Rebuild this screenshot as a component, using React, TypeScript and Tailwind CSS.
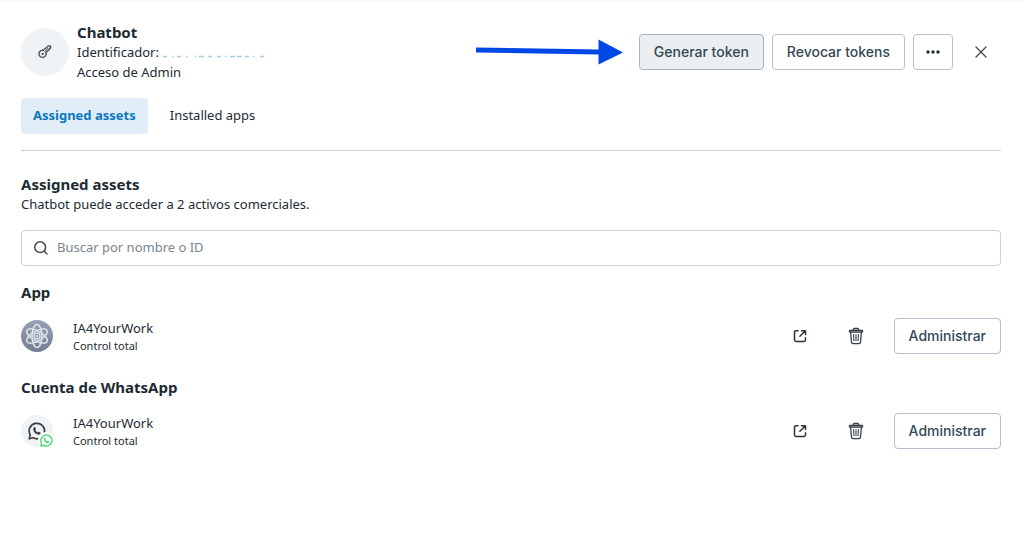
import { useState, type ReactNode } from 'react';

interface Asset {
  id: string;
  title: string;
  name: string;
  role: string;
  avatar: ReactNode;
}

function KeyIcon() {
  return (
    <svg width="16" height="16" viewBox="0 0 16 16" fill="none" stroke="#53595e" strokeWidth="1.5" strokeLinecap="round" strokeLinejoin="round">
      <path d="M6.300 6.300 11.300 2 13.500 2 13.700 3.800 12.400 4.700 12.200 6 10.900 6.400 9 8.700" />
      <path d="M6.300 6.300A3.600 3.600 0 1 0 9 8.700" />
      <path d="m7.500 7.900 3.600-3.700" strokeWidth="1" />
      <circle cx="5.700" cy="9.900" r="1.200" fill="#53595e" stroke="none" />
    </svg>
  );
}

function PointerArrow() {
  return (
    <svg width="147" height="26" viewBox="0 0 147 26" className="shrink-0" aria-hidden="true">
      <path d="M0 8.500 122.500 10.500V0.500L147 13.500 122.500 25.500V15.500L0 13.500Z" fill="#0048e5" />
    </svg>
  );
}

// Tips of the hidden account number
function HiddenId() {
  return (
    <svg width="104" height="7" viewBox="0 0 104 7" className="ml-0.5 inline-block align-bottom" stroke="#a5cde6" strokeWidth="1.500" aria-hidden="true">
      <path d="M2 1.500h4M11 1.500h1.500M16 1.500h4M25 1.500h1.500M34 1.500h1.500M38 1.500h5M47 1.500h4M56 1.500h4M64 1.500h1.500M69 1.500h5M76 1.500h5M84 1.500h4M92 1.500h1.500M99 1.500h4" />
    </svg>
  );
}

function SearchIcon() {
  return (
    <svg width="16" height="16" viewBox="0 0 16 16" fill="none" stroke="#444950" strokeWidth="1.500" strokeLinecap="round">
      <circle cx="7.200" cy="7.200" r="5.400" />
      <path d="m11.300 11.300 2.700 2.700" />
    </svg>
  );
}

function OpenIcon() {
  return (
    <svg width="14" height="14" viewBox="0 0 14 14" fill="none" stroke="#2b343a" strokeWidth="1.500" strokeLinecap="round" strokeLinejoin="round">
      <path d="M5 1.700H2.900A1.400 1.400 0 0 0 1.500 3.100V11A1.400 1.400 0 0 0 2.900 12.400h8.200a1.400 1.400 0 0 0 1.400-1.400V8.800" />
      <path d="M8.600 1.700h3.900v3.900M12.200 2 6.900 7.300" />
    </svg>
  );
}

function TrashIcon() {
  return (
    <svg width="16" height="18" viewBox="0 0 16 18" fill="none" stroke="#3a4248" strokeWidth="1.300" strokeLinecap="round" strokeLinejoin="round">
      <path d="M1.500 3.500h13v1.600h-13zM5.300 3.300V2.500a1 1 0 0 1 1-1h3.400a1 1 0 0 1 1 1v.8" />
      <path d="m2.600 5.300.9 9.900a1.600 1.600 0 0 0 1.600 1.400h5.800a1.600 1.600 0 0 0 1.600-1.400l.9-9.900" />
      <path d="m5.600 7.500.3 6.300M8 7.500v6.300M10.400 7.500l-.3 6.300" strokeWidth="1.100" />
    </svg>
  );
}

function AtomAvatar() {
  return (
    <svg width="32" height="32" viewBox="0 0 32 32" fill="none">
      <defs>
        <linearGradient id="atom-bg" x1="0" y1="0" x2="0" y2="1">
          <stop offset="0" stopColor="#97a0b5" />
          <stop offset="1" stopColor="#747d92" />
        </linearGradient>
      </defs>
      <circle cx="16" cy="16" r="16" fill="url(#atom-bg)" />
      <g stroke="#dfe3eb" strokeWidth="1.500">
        <ellipse cx="16" cy="16" rx="5" ry="11.500" />
        <ellipse cx="16" cy="16" rx="5" ry="11.500" transform="rotate(60 16 16)" />
        <ellipse cx="16" cy="16" rx="5" ry="11.500" transform="rotate(120 16 16)" />
        <circle cx="16" cy="16" r="3" />
      </g>
      <circle cx="16" cy="16" r="1.200" fill="#dfe3eb" />
    </svg>
  );
}

function WhatsAppGlyph({ size, color }: { size: number; color: string }) {
  return (
    <svg width={size} height={size} viewBox="0 0 18 18" fill="none">
      <path d="M1.200 16.800 2.200 12.900A7.700 7.700 0 1 1 5.200 15.800Z" stroke={color} strokeWidth="1.700" strokeLinejoin="round" />
      <path
        d="M6.100 5.300c.4-.4.900-.3 1.100.1l.6 1.400c.1.300 0 .6-.5 1.100.6 1.200 1.400 1.900 2.600 2.500.5-.6.700-.8 1.100-.6l1.300.6c.4.200.5.500.3 1-.5 1.100-1.500 1.500-2.700 1.200C7.600 12 5.800 10.200 5.300 7.700c-.2-1 .1-1.800.8-2.400Z"
        fill={color}
      />
    </svg>
  );
}

function WhatsAppAvatar() {
  return (
    <div className="relative flex size-8 items-center justify-center rounded-full bg-[#f0f3f6]">
      <WhatsAppGlyph size={18} color="#3b3f43" />
      <span className="absolute -right-px -bottom-px flex size-4 items-center justify-center rounded-full bg-white">
        <WhatsAppGlyph size={13} color="#35d366" />
      </span>
    </div>
  );
}

const assets: Asset[] = [
  { id: 'app', title: 'App', name: 'IA4YourWork', role: 'Control total', avatar: <AtomAvatar /> },
  { id: 'whatsapp', title: 'Cuenta de WhatsApp', name: 'IA4YourWork', role: 'Control total', avatar: <WhatsAppAvatar /> },
];

const outlineButton =
  "h-9 rounded border border-[#b4c0cb] px-3.5 font-['Inter',sans-serif] text-sm font-medium text-[#344854] hover:bg-gray-50";

function AssetSection({ asset }: { asset: Asset }) {
  return (
    <section>
      <h3 className="text-[15px] leading-5 font-bold">{asset.title}</h3>
      <div className="mt-4 flex items-center">
        {asset.avatar}
        <div className="ml-5 flex-1">
          <p className="text-[13px] leading-5">{asset.name}</p>
          <p className="text-[11px] leading-4">{asset.role}</p>
        </div>
        <div className="flex items-center gap-5">
          <button aria-label="Abrir" className="flex size-9 items-center justify-center rounded">
            <OpenIcon />
          </button>
          <button aria-label="Eliminar" className="flex size-9 items-center justify-center rounded">
            <TrashIcon />
          </button>
          <button className={outlineButton}>Administrar</button>
        </div>
      </div>
    </section>
  );
}

export default function App() {
  const [tab, setTab] = useState<'assets' | 'apps'>('assets');
  const [query, setQuery] = useState('');

  return (
    <div className="min-h-screen border-t-2 border-[#f6f7f8] bg-white pt-5 pr-[23px] pl-[21px] font-['Noto_Sans',sans-serif] text-[#1c2b33]">
      {/* Header */}
      <header className="flex items-center">
        <div className="flex size-12 shrink-0 items-center justify-center rounded-full bg-[#f0f3f6]">
          <KeyIcon />
        </div>
        <div className="ml-2 flex-1 text-[13px] leading-5">
          <h1 className="text-[15px] leading-5 font-bold">Chatbot</h1>
          <p>
            Identificador:
            <HiddenId />
          </p>
          <p>Acceso de Admin</p>
        </div>
        <PointerArrow />
        <div className="ml-4 flex gap-2">
          <button className="h-9 rounded border border-[#a9b6c2] bg-[#ebeff2] px-3.5 font-['Inter',sans-serif] text-sm font-medium text-[#344854]">
            Generar token
          </button>
          <button className={outlineButton}>Revocar tokens</button>
          <button aria-label="Más opciones" className="flex h-9 w-10 items-center justify-center rounded border border-[#b4c0cb]">
            <svg width="14" height="4" viewBox="0 0 14 4" fill="#1c2b33">
              <circle cx="2" cy="2" r="1.700" />
              <circle cx="7" cy="2" r="1.700" />
              <circle cx="12" cy="2" r="1.700" />
            </svg>
          </button>
          <button aria-label="Cerrar" className="flex h-9 w-10 items-center justify-center">
            <svg width="12" height="12" viewBox="0 0 12 12" stroke="#444950" strokeWidth="1.300" strokeLinecap="round">
              <path d="m1 1 10 10M11 1 1 11" />
            </svg>
          </button>
        </div>
      </header>

      {/* Tabs */}
      <nav className="mt-4 flex gap-2.5 border-b border-[#cbd2d9] pb-4">
        <button
          onClick={() => setTab('assets')}
          className={`h-9 rounded px-3 text-[13px] ${tab === 'assets' ? 'bg-[#e1edf7] font-bold text-[#0a78be]' : ''}`}
        >
          Assigned assets
        </button>
        <button
          onClick={() => setTab('apps')}
          className={`h-9 rounded px-3 text-[13px] ${tab === 'apps' ? 'bg-[#e1edf7] font-bold text-[#0a78be]' : ''}`}
        >
          Installed apps
        </button>
      </nav>

      <main className="pt-[23px]">
        <h2 className="text-[15px] leading-5 font-bold">Assigned assets</h2>
        <p className="text-[13px] leading-5">Chatbot puede acceder a 2 activos comerciales.</p>

        {/* Search */}
        <label className="mt-4 flex h-9 items-center gap-2 rounded border border-[#cbd2d9] px-[11px]">
          <SearchIcon />
          <input
            value={query}
            onChange={(e) => setQuery(e.target.value)}
            placeholder="Buscar por nombre o ID"
            aria-label="Buscar por nombre o ID"
            className="flex-1 text-[13px] outline-none placeholder:text-[#7a858c]"
          />
        </label>

        <div className="mt-4 flex flex-col gap-[23px]">
          {assets.map((asset) => (
            <AssetSection key={asset.id} asset={asset} />
          ))}
        </div>
      </main>
    </div>
  );
}
